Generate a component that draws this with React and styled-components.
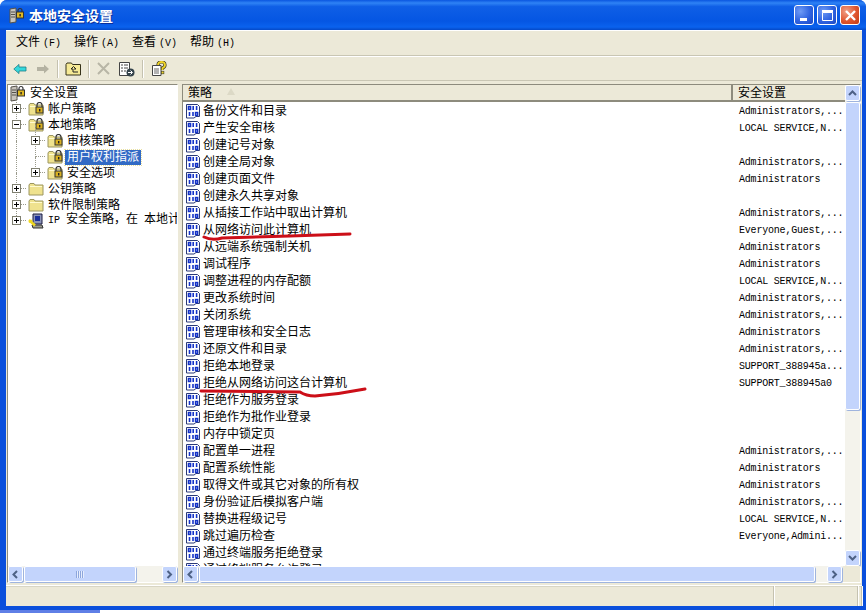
import React from 'react';
import styled, { createGlobalStyle } from 'styled-components';

const Global = createGlobalStyle`
html, body {
    margin: 0;
    padding: 0;
    background: #fff;
}
svg {
    flex: none;
}
`;

const CN = '"Noto Sans CJK SC", "Liberation Sans", sans-serif';

const Screen = styled.div`
position: relative;
width: 866px;
height: 613px;
overflow: hidden;
display: flex;
flex-direction: column;
font-family: ${CN};
font-size: 12px;
line-height: 14px;
color: #000;
`;

const Frame = styled.div`
flex: 1;
min-height: 0;
display: flex;
flex-direction: column;
background: #0a4fdc;
border-radius: 7px 7px 0 0;
padding: 0 4px 4px 6px;
`;

const Desk = styled.div`
height: 3px;
background: linear-gradient(90deg, #5f7fe6 0, #5f7fe6 100px, #fff 100px);
`;

const TitleBar = styled.div`
height: 30px;
margin: 0 -4px 0 -6px;
padding: 0 6px 0 8px;
flex: none;
display: flex;
align-items: center;
gap: 4px;
border-radius: 7px 7px 0 0;
background: linear-gradient(180deg, #0a56e0 0, #2f83f5 10%, #0f5fe6 22%, #0556e3 70%, #0a62ee 90%, #0449c8 100%);
`;

const TitleText = styled.div`
flex: 1;
font-size: 14px;
line-height: 18px;
font-weight: 700;
color: #fff;
text-shadow: 1px 1px 0 #0a2f9a;
`;

const CapGroup = styled.div`
display: flex;
gap: 3px;
`;

const CapBtn = styled.div`
width: 20px;
height: 20px;
box-sizing: border-box;
border: 1px solid #fff;
border-radius: 3px;
display: flex;
align-items: center;
justify-content: center;
background: ${p => p.$close
        ? 'radial-gradient(circle at 30% 30%, #f0a088 0, #e0562e 55%, #c23a14 100%)'
        : 'radial-gradient(circle at 30% 30%, #6f9bf5 0, #2f63e0 55%, #1d48c4 100%)'};
`;

const Body = styled.div`
flex: 1;
min-height: 0;
display: flex;
flex-direction: column;
background: #ece9d8;
`;

const MenuBar = styled.div`
height: 26px;
flex: none;
box-sizing: border-box;
display: flex;
align-items: center;
padding-left: 10px;
gap: 18px;
border-bottom: 1px solid #c9c6b4;
box-shadow: inset 0 1px 0 #fff;
`;

const MenuItem = styled.div`
display: flex;
align-items: baseline;
gap: 3px;
width: 40px;
white-space: nowrap;
`;

const Hot = styled.span`
font-family: "Liberation Mono", monospace;
font-size: 10px;
white-space: pre;
`;

const ToolBar = styled.div`
height: 25px;
flex: none;
box-sizing: border-box;
display: flex;
align-items: center;
padding-left: 2px;
border-top: 1px solid #fff;
border-bottom: 1px solid #c9c6b4;
`;

const Tool = styled.div`
width: ${p => p.$w || 23}px;
height: 22px;
display: flex;
align-items: center;
justify-content: center;
`;

const ToolSep = styled.div`
width: 1px;
height: 18px;
margin: 0 ${p => p.$m || 3}px;
background: #c5c2b0;
box-shadow: 1px 0 0 #fff;
`;

const Content = styled.div`
flex: 1;
min-height: 0;
display: flex;
gap: 4px;
padding: 3px 1px 2px 1px;
`;

const Pane = styled.div`
box-sizing: border-box;
display: flex;
flex-direction: column;
background: #fff;
border: 1px solid;
border-color: #8d8b7d #fff #fff #8d8b7d;
`;

const TreePane = styled(Pane)`
width: 171px;
flex: none;
`;

const ListPane = styled(Pane)`
flex: 1;
min-width: 0;
`;

const TreeBody = styled.div`
flex: 1;
min-height: 0;
overflow: hidden;
`;

const TreeRow = styled.div`
position: relative;
height: 16px;
display: flex;
align-items: center;
padding-left: ${p => p.$depth * 19 + 1}px;
white-space: nowrap;
gap: 2px;
`;

const Expander = styled.div`
position: absolute;
left: ${p => p.$depth * 19 - 15}px;
top: 3px;
width: 9px;
height: 9px;
box-sizing: border-box;
border: 1px solid #7f7f70;
background: #fff;
z-index: 1;
&::before {
    content: '';
    position: absolute;
    left: 1px;
    top: 3px;
    width: 5px;
    height: 1px;
    background: #000;
}
&::after {
    content: '';
    display: ${p => p.$open ? 'none' : 'block'};
    position: absolute;
    left: 3px;
    top: 1px;
    width: 1px;
    height: 5px;
    background: #000;
}
`;

const Branch = styled.div`
position: absolute;
left: ${p => p.$depth * 19 - 11}px;
top: 7px;
width: 10px;
border-top: 1px dotted #9a9a8c;
`;

const Trunk = styled.div`
position: absolute;
left: ${p => p.$left}px;
top: ${p => p.$top}px;
height: ${p => p.$h}px;
border-left: 1px dotted #9a9a8c;
`;

const TreeLabel = styled.span`
padding: 0 2px 3px;
line-height: 12px;
background: ${p => p.$sel ? '#316ac5' : 'transparent'};
color: ${p => p.$sel ? '#fff' : '#000'};
outline: ${p => p.$sel ? '1px dotted #e8e0a0' : 'none'};
`;

const HeadRow = styled.div`
height: 17px;
flex: none;
box-sizing: border-box;
display: flex;
background: #ece9d8;
border-bottom: 2px solid #8d8b7d;
`;

const HeadCell = styled.div`
width: ${p => p.$w}px;
flex: ${p => p.$grow ? 1 : 'none'};
box-sizing: border-box;
padding: 0 0 2px 5px;
display: flex;
align-items: center;
gap: 15px;
border-right: ${p => p.$grow ? '0' : '2px solid #8d8b7d'};
`;

const Sort = styled.span`
width: 0;
height: 0;
border-left: 4px solid transparent;
border-right: 4px solid transparent;
border-bottom: 7px solid #dcd9c6;
`;

const ListArea = styled.div`
flex: 1;
min-height: 0;
display: flex;
`;

const Rows = styled.div`
flex: 1;
min-width: 0;
overflow: hidden;
`;

const Row = styled.div`
height: 17px;
display: flex;
align-items: center;
white-space: nowrap;
`;

const NameCell = styled.div`
width: 556px;
flex: none;
display: flex;
align-items: center;
gap: 2px;
padding-left: 2px;
box-sizing: border-box;
`;

const NameText = styled.span`
padding-bottom: 2px;
`;

const ValueCell = styled.div`
font-family: "Liberation Mono", monospace;
font-size: 10px;
letter-spacing: -0.2px;
padding-top: 2px;
`;

const VScroll = styled.div`
width: 15px;
flex: none;
display: flex;
flex-direction: column;
gap: 1px;
background: #f4f3ec;
`;

const HScroll = styled.div`
height: 16px;
flex: none;
display: flex;
gap: 1px;
background: #f4f3ec;
`;

const ArrowBtn = styled.div`
width: 15px;
height: 16px;
flex: none;
box-sizing: border-box;
border: 1px solid #fff;
border-radius: 2px;
background: #c3d4fc;
display: flex;
align-items: center;
justify-content: center;
box-shadow: 1px 1px 0 #9fb4de;
`;

const Thumb = styled.div`
flex: none;
${p => p.$vertical ? `height: ${p.$size}px;` : `width: ${p.$size}px;`}
box-sizing: border-box;
border: 1px solid #fff;
border-radius: 2px;
background: #c3d4fc;
box-shadow: 1px 1px 0 #9fb4de;
display: flex;
align-items: center;
justify-content: center;
`;

const Grip = styled.div`
width: 8px;
height: 7px;
background: repeating-linear-gradient(90deg, #8da6dc 0, #8da6dc 1px, #e6edfd 1px, #e6edfd 2px);
`;

const Track = styled.div`
flex: 1;
`;

const Corner = styled.div`
width: 17px;
flex: none;
background: #ece9d8;
`;

const Status = styled.div`
height: 21px;
flex: none;
display: flex;
box-sizing: border-box;
border-top: 1px solid #fff;
box-shadow: inset 0 1px 0 #d8d5c4;
`;

const StatusCell = styled.div`
flex: ${p => p.$grow ? 1 : 'none'};
width: ${p => p.$w ? p.$w + 'px' : 'auto'};
box-sizing: border-box;
border-right: 1px solid #c5c2b0;
box-shadow: 1px 0 0 #fff;
`;

const Ink = styled.svg`
position: absolute;
left: 0;
top: 0;
pointer-events: none;
`;

const ArrowIcon = ({ dir }) => {
    const d = {
        up: 'M1 6 L4.5 2.5 L8 6',
        down: 'M1 2 L4.5 5.5 L8 2',
        left: 'M6 1 L2.5 4.5 L6 8',
        right: 'M2.5 1 L6 4.5 L2.5 8'
    }[dir];
    return <svg width="9" height="9" viewBox="0 0 9 9"><path d={d} fill="none" stroke="#4d6185" strokeWidth="2"/></svg>;
};

const PolicyIcon = () => (
    <svg width="16" height="16" viewBox="0 0 16 16">
        <path d="M1.5 1.5 H12.5 L14.5 3.5 V13.5 H11 L9 15 H1.5 Z" fill="#fff" stroke="#2b3a78"/>
        <g fill="none" stroke="#1433c8" strokeWidth="1.6">
            <rect x="3.5" y="3.6" width="2" height="2.8"/>
            <path d="M8.2 3 V7"/>
            <path d="M11.6 3 V7"/>
            <path d="M4.5 9 V13"/>
            <path d="M8 9 V13"/>
            <rect x="10.6" y="9.6" width="2" height="2.8"/>
        </g>
    </svg>
);

const FolderIcon = ({ lock }) => (
    <svg width="16" height="14" viewBox="0 0 16 14">
        <path d="M1 3 L2 1.5 H6 L7 3 H15 V13 H1 Z" fill="#efe28e" stroke="#9c9660"/>
        <path d="M2 4 H14 V5 H2 Z" fill="#fffbd0"/>
        {lock && <>
            <path d="M9 5 V3 A2.5 2.5 0 0 1 14 3 V5" fill="none" stroke="#333" strokeWidth="1.2"/>
            <rect x="8" y="5" width="7" height="6" fill="#d8b020" stroke="#333"/>
            <rect x="11" y="7" width="1.4" height="2.4" fill="#222"/>
        </>}
    </svg>
);

const RootIcon = () => (
    <svg width="17" height="17" viewBox="0 0 17 17">
        <path d="M2 2 L8 1 V15 L2 16 Z" fill="#c8c4bc" stroke="#55524a"/>
        <path d="M3 5 H7 M3 7.5 H7 M3 10 H7" stroke="#55524a"/>
        <path d="M10 5 V3.5 A2 2 0 0 1 14 3.5 V5" fill="none" stroke="#333" strokeWidth="1.2"/>
        <rect x="8.5" y="5" width="7" height="6" fill="#e0b820" stroke="#333"/>
        <rect x="11.4" y="7" width="1.4" height="2.4" fill="#222"/>
    </svg>
);

const IpIcon = () => (
    <svg width="16" height="16" viewBox="0 0 16 16">
        <path d="M5 1 H14 V11 H5 Z" fill="#8a93b8" stroke="#1a1a40"/>
        <rect x="7" y="3" width="5" height="5" fill="#1a2f9c"/>
        <path d="M4 12 H14 L15 15 H5 Z" fill="#9c9c90" stroke="#333"/>
        <path d="M1 7 L7 12.5" stroke="#f0d820" strokeWidth="2.6"/>
        <path d="M1 9.5 L4 7" stroke="#f0d820" strokeWidth="1.6"/>
    </svg>
);

const BackIcon = () => (
    <svg width="14" height="12" viewBox="0 0 14 12">
        <path d="M0.8 6 L6 1.4 V4 H13 V8 H6 V10.6 Z" fill="#35d8dc" stroke="#1f7f88" strokeWidth="0.8"/>
    </svg>
);

const ForwardIcon = () => (
    <svg width="14" height="12" viewBox="0 0 14 12">
        <path d="M13 6 L8 1.4 V4 H1 V8 H8 V10.6 Z" fill="#b4b2a2"/>
    </svg>
);

const UpFolderIcon = () => (
    <svg width="17" height="14" viewBox="0 0 17 14">
        <path d="M1 2.5 L2 1 H6.5 L7.5 2.5 H15.5 V13 H1 Z" fill="#f6ea96" stroke="#35321a"/>
        <path d="M8.5 4.5 L6 7 H8 V10 H13 M8.5 4.5 L11 7 H9" fill="none" stroke="#222"/>
    </svg>
);

const DeleteIcon = () => (
    <svg width="13" height="13" viewBox="0 0 13 13">
        <path d="M1 1 L12 12 M12 1 L1 12" stroke="#b8b6a6" strokeWidth="2"/>
    </svg>
);

const ExportIcon = () => (
    <svg width="17" height="16" viewBox="0 0 17 16">
        <path d="M1.5 1.5 H11.5 V14.5 H1.5 Z" fill="#fff" stroke="#444"/>
        <path d="M3 4 H5 M6 4 H10 M3 7 H5 M6 7 H10 M3 10 H5 M6 10 H8" stroke="#444"/>
        <circle cx="12.5" cy="11.5" r="4" fill="#33424a"/>
        <path d="M10 11.5 H14 M12.5 9.5 L14.5 11.5 L12.5 13.5" stroke="#fff" fill="none"/>
    </svg>
);

const HelpIcon = () => (
    <svg width="16" height="16" viewBox="0 0 16 16">
        <path d="M1.5 4.5 H10 V14.5 H1.5 Z" fill="#fff" stroke="#444"/>
        <path d="M3 8 H8 M3 10 H8 M3 12 H8" stroke="#666"/>
        <path d="M7 4 Q7 1 10.5 1 Q14 1 14 4 Q14 6 11.5 7 V9" fill="none" stroke="#3c3a20" strokeWidth="3.2"/>
        <path d="M7 4 Q7 1 10.5 1 Q14 1 14 4 Q14 6 11.5 7 V9" fill="none" stroke="#f0d428" strokeWidth="1.8"/>
        <rect x="10.3" y="10.2" width="2.6" height="2.6" fill="#f0d428" stroke="#3c3a20" strokeWidth="0.6"/>
    </svg>
);

const policies = [
    ['备份文件和目录', 'Administrators,...'],
    ['产生安全审核', 'LOCAL SERVICE,N...'],
    ['创建记号对象', ''],
    ['创建全局对象', 'Administrators,...'],
    ['创建页面文件', 'Administrators'],
    ['创建永久共享对象', ''],
    ['从插接工作站中取出计算机', 'Administrators,...'],
    ['从网络访问此计算机', 'Everyone,Guest,...'],
    ['从远端系统强制关机', 'Administrators'],
    ['调试程序', 'Administrators'],
    ['调整进程的内存配额', 'LOCAL SERVICE,N...'],
    ['更改系统时间', 'Administrators,...'],
    ['关闭系统', 'Administrators,...'],
    ['管理审核和安全日志', 'Administrators'],
    ['还原文件和目录', 'Administrators,...'],
    ['拒绝本地登录', 'SUPPORT_388945a...'],
    ['拒绝从网络访问这台计算机', 'SUPPORT_388945a0'],
    ['拒绝作为服务登录', ''],
    ['拒绝作为批作业登录', ''],
    ['内存中锁定页', ''],
    ['配置单一进程', 'Administrators,...'],
    ['配置系统性能', 'Administrators'],
    ['取得文件或其它对象的所有权', 'Administrators'],
    ['身份验证后模拟客户端', 'Administrators,...'],
    ['替换进程级记号', 'LOCAL SERVICE,N...'],
    ['跳过遍历检查', 'Everyone,Admini...'],
    ['通过终端服务拒绝登录', ''],
    ['通过终端服务允许登录', '']
];

const menus = [['文件', '(F)'], ['操作', '(A)'], ['查看', '(V)'], ['帮助', '(H)']];

const tree = [
    { label: '帐户策略', depth: 1, exp: 'closed', icon: <FolderIcon lock/> },
    { label: '本地策略', depth: 1, exp: 'open', icon: <FolderIcon lock/> },
    { label: '审核策略', depth: 2, exp: 'closed', icon: <FolderIcon lock/> },
    { label: '用户权利指派', depth: 2, sel: true, icon: <FolderIcon lock/> },
    { label: '安全选项', depth: 2, exp: 'closed', icon: <FolderIcon lock/> },
    { label: '公钥策略', depth: 1, exp: 'closed', icon: <FolderIcon/> },
    { label: '软件限制策略', depth: 1, exp: 'closed', icon: <FolderIcon/> },
    { label: <><Hot>IP </Hot>安全策略，在<Hot> </Hot>本地计算机</>, depth: 1, exp: 'closed', icon: <IpIcon/> }
];

export default function App() {
    return (
        <Screen>
            <Global/>
            <Frame>
                <TitleBar>
                    <RootIcon/>
                    <TitleText>本地安全设置</TitleText>
                    <CapGroup>
                        <CapBtn>
                            <svg width="13" height="13" viewBox="0 0 13 13"><rect x="2" y="9" width="7" height="3" fill="#fff"/></svg>
                        </CapBtn>
                        <CapBtn>
                            <svg width="13" height="13" viewBox="0 0 13 13"><path d="M1.5 3.5 H11.5 V11.5 H1.5 Z" fill="none" stroke="#fff"/><rect x="1" y="1" width="11" height="2.4" fill="#fff"/></svg>
                        </CapBtn>
                        <CapBtn $close>
                            <svg width="13" height="13" viewBox="0 0 13 13"><path d="M2 2 L11 11 M11 2 L2 11" stroke="#fff" strokeWidth="2.4"/></svg>
                        </CapBtn>
                    </CapGroup>
                </TitleBar>
                <Body>
                    <MenuBar>
                        {menus.map(([name, key]) => (
                            <MenuItem key={name}>{name}<Hot>{key}</Hot></MenuItem>
                        ))}
                    </MenuBar>
                    <ToolBar>
                        <Tool><BackIcon/></Tool>
                        <Tool><ForwardIcon/></Tool>
                        <ToolSep/>
                        <Tool $w={24}><UpFolderIcon/></Tool>
                        <ToolSep/>
                        <Tool><DeleteIcon/></Tool>
                        <Tool><ExportIcon/></Tool>
                        <ToolSep $m={4}/>
                        <Tool><HelpIcon/></Tool>
                    </ToolBar>
                    <Content>
                        <TreePane>
                            <TreeBody>
                                <TreeRow $depth={0}>
                                    <RootIcon/>
                                    <TreeLabel>安全设置</TreeLabel>
                                </TreeRow>
                                {tree.map((t, i) => (
                                    <TreeRow key={i} $depth={t.depth}>
                                        {t.depth === 2 && <Trunk $left={8} $top={-8} $h={16}/>}
                                        {t.depth === 2 && <Trunk $left={27} $top={-8} $h={16}/>}
                                        {t.depth === 1 && <Trunk $left={8} $top={-8} $h={i === 7 ? 15 : 16}/>}
                                        <Branch $depth={t.depth}/>
                                        {t.exp && <Expander $depth={t.depth} $open={t.exp === 'open'}/>}
                                        {t.icon}
                                        <TreeLabel $sel={t.sel}>{t.label}</TreeLabel>
                                    </TreeRow>
                                ))}
                            </TreeBody>
                            <HScroll>
                                <ArrowBtn><ArrowIcon dir="left"/></ArrowBtn>
                                <Thumb $size={112}><Grip/></Thumb>
                                <Track/>
                                <ArrowBtn><ArrowIcon dir="right"/></ArrowBtn>
                            </HScroll>
                        </TreePane>
                        <ListPane>
                            <ListArea>
                                <Rows>
                                    <HeadRow>
                                        <HeadCell $w={550}>策略<Sort/></HeadCell>
                                        <HeadCell $grow>安全设置</HeadCell>
                                    </HeadRow>
                                    {policies.map(([name, value]) => (
                                        <Row key={name}>
                                            <NameCell><PolicyIcon/><NameText>{name}</NameText></NameCell>
                                            <ValueCell>{value}</ValueCell>
                                        </Row>
                                    ))}
                                </Rows>
                                <VScroll>
                                    <ArrowBtn><ArrowIcon dir="up"/></ArrowBtn>
                                    <Thumb $vertical $size={308}/>
                                    <Track/>
                                    <ArrowBtn><ArrowIcon dir="down"/></ArrowBtn>
                                </VScroll>
                            </ListArea>
                            <HScroll>
                                <ArrowBtn><ArrowIcon dir="left"/></ArrowBtn>
                                <Thumb $size={616}/>
                                <Track/>
                                <ArrowBtn><ArrowIcon dir="right"/></ArrowBtn>
                                <Corner/>
                            </HScroll>
                        </ListPane>
                    </Content>
                    <Status>
                        <StatusCell $w={768}/>
                        <StatusCell $w={84}/>
                        <StatusCell $grow/>
                    </Status>
                </Body>
            </Frame>
            <Desk/>
            <Ink width="866" height="613" viewBox="0 0 866 613">
                <path d="M204 237 Q212 241 222 238 L290 236 L350 234" fill="none" stroke="#cc0f18" strokeWidth="3" strokeLinecap="round"/>
                <path d="M201 391 L300 392 Q306 396 315 396 Q340 394 365 389" fill="none" stroke="#cc0f18" strokeWidth="3" strokeLinecap="round"/>
            </Ink>
        </Screen>
    );
}
